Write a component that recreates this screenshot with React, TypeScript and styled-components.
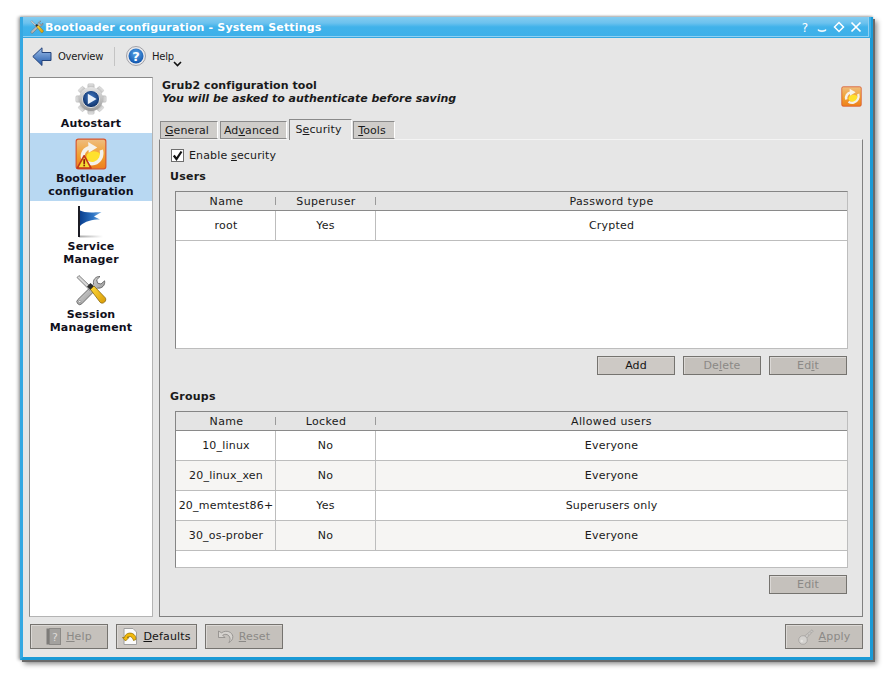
import * as React from "react";
import styled, { createGlobalStyle } from "styled-components";

const Global = createGlobalStyle`
  html, body { margin: 0; padding: 0; background: #fff; }
  body { font-family: "DejaVu Sans", sans-serif; font-size: 11px; color: #1a1a1a; letter-spacing: 0.15px; }
`;

const Desktop = styled.div`
  padding: 17px 0 0 20px;
  width: 873px;
  height: 665px;
  overflow: hidden;
`;

const Win = styled.div`
  box-sizing: border-box;
  width: 853px;
  height: 643px;
  display: flex;
  flex-direction: column;
  background: #e6e6e6;
  border: solid #1a9ad6;
  border-width: 0 3px 3px 3px;
  border-left-color: #35a8e2;
  box-shadow: 2px 2px 0 #6a6a6a, 4px 4px 5px rgba(0, 0, 0, 0.45), -2px 0 3px rgba(0, 0, 0, 0.3), 0 -1px 2px rgba(0, 0, 0, 0.2);
`;

const TitleBar = styled.div`
  height: 21px;
  flex: none;
  display: flex;
  align-items: center;
  padding: 0 6px 0 7px;
  margin-right: -1px;
  color: #fff;
  background: linear-gradient(#84ccf0, #6cc2ee 30%, #40b2ea 50%, #3db0e9);
  border-bottom: 1px solid #35a8e2;
  border-right: 2px solid #3db0e9;
  box-shadow: inset -1px -1px 0 #8fd0f2;
  box-sizing: border-box;
`;

const TitleText = styled.div`
  margin-left: 1px;
  font-weight: bold;
  font-size: 11px;
  letter-spacing: 0.17px;
  flex: 1;
  white-space: nowrap;
`;

const TitleButtons = styled.div`
  display: flex;
  align-items: center;
  gap: 3px;
`;

const Inner = styled.div`
  flex: 1;
  display: flex;
  flex-direction: column;
  padding: 0 7px 8px 6px;
  min-height: 0;
`;

const Toolbar = styled.div`
  height: 39px;
  flex: none;
  display: flex;
  align-items: center;
  padding: 0 0 3px 3px;
  box-sizing: border-box;
`;

const ToolLabel = styled.span`
  margin-left: 6px;
  font-size: 10px;
  letter-spacing: -0.25px;
`;

const ToolSep = styled.div`
  width: 1px;
  height: 19px;
  background: #c4c4c4;
  margin: 0 11px 0 11px;
`;

const ToolMenu = styled.div`
  position: relative;
  display: flex;
  align-items: center;
`;

const MenuArrow = styled.svg`
  position: absolute;
  left: 47px;
  top: 15px;
`;

const Main = styled.div`
  flex: 1;
  display: flex;
  gap: 6px;
  min-height: 0;
`;

const Sidebar = styled.div`
  box-sizing: border-box;
  width: 124px;
  flex: none;
  background: #fff;
  border: 1px solid #b4b4b4;
  border-top-color: #8c8c8c;
  border-left-color: #8c8c8c;
`;

const NavItem = styled.div<{ $active?: boolean }>`
  display: flex;
  flex-direction: column;
  align-items: center;
  padding: 5px 0 3px;
  background: ${(p) => (p.$active ? "#b8d8f2" : "transparent")};
`;

const NavIcon = styled.div`
  height: 32px;
  margin-bottom: 2px;
`;

const NavLabel = styled.div`
  font-weight: bold;
  font-size: 11px;
  line-height: 13px;
  letter-spacing: 0.15px;
  text-align: center;
  color: #10101c;
`;

const Content = styled.div`
  flex: 1;
  min-width: 0;
  display: flex;
  flex-direction: column;
`;

const Header = styled.div`
  height: 44px;
  flex: none;
  display: flex;
  justify-content: space-between;
  padding: 2px 1px 0 3px;
  box-sizing: border-box;
`;

const HeadTitle = styled.div`
  font-weight: bold;
  line-height: 13px;
  letter-spacing: 0.08px;
`;

const HeadNote = styled(HeadTitle)`
  font-style: italic;
  letter-spacing: -0.02px;
`;

const HeadIcon = styled.div`
  margin-top: 7px;
`;

const Tabs = styled.div`
  height: 18px;
  flex: none;
  display: flex;
  align-items: flex-end;
  padding-left: 1px;
  position: relative;
  z-index: 1;
`;

const Tab = styled.div<{ $active?: boolean; $w: number; $gap?: number }>`
  box-sizing: border-box;
  height: ${(p) => (p.$active ? "21px" : "18px")};
  padding: ${(p) => (p.$active ? "3px" : "2px")} 4px 0 0;
  width: ${(p) => p.$w}px;
  margin-right: ${(p) => p.$gap ?? 2}px;
  margin-bottom: ${(p) => (p.$active ? "-1px" : "0")};
  text-align: center;
  background: ${(p) => (p.$active ? "#e6e6e6" : "#cfcdca")};
  border: 1px solid #8a8a8a;
  border-bottom: ${(p) => (p.$active ? "none" : "1px solid #8a8a8a")};
  border-right-color: #fff;
  line-height: 13px;
  letter-spacing: 0.1px;
`;

const Pane = styled.div`
  box-sizing: border-box;
  flex: 1;
  border: 1px solid #808080;
  border-top-color: #f4f4f4;
  padding: 9px 15px 0 10px;
  min-height: 0;
  display: flex;
  flex-direction: column;
`;

const CheckRow = styled.label`
  display: flex;
  align-items: center;
  height: 13px;
  margin-left: 1px;
  gap: 5px;
`;

const CheckBox = styled.div`
  box-sizing: border-box;
  width: 13px;
  height: 13px;
  background: #fff;
  border: 1px solid #6e6e6e;
  display: flex;
  align-items: center;
  justify-content: center;
`;

const SectionLabel = styled.div<{ $top: number }>`
  font-weight: bold;
  line-height: 13px;
  letter-spacing: 0.25px;
  margin-top: ${(p) => p.$top}px;
`;

const TableBox = styled.div<{ $h: number }>`
  box-sizing: border-box;
  height: ${(p) => p.$h}px;
  margin: 8px 0 0 5px;
  width: 673px;
  background: #fff;
  border: 1px solid #bdbdbd;
  border-top-color: #858585;
  border-left-color: #858585;
  display: flex;
  flex-direction: column;
`;

const HeadRow = styled.div`
  display: grid;
  grid-template-columns: 99px 100px 1fr;
  height: 18px;
  flex: none;
  background: #e4e4e4;
  border-bottom: 1px solid #8a8a8a;
  padding-left: 1px;
`;

const HeadCell = styled.div<{ $tick?: boolean }>`
  position: relative;
  text-align: center;
  line-height: 19px;
  letter-spacing: 0.35px;
  &::after {
    content: "";
    display: ${(p) => (p.$tick ? "block" : "none")};
    position: absolute;
    right: 0;
    top: 5px;
    width: 1px;
    height: 8px;
    background: #9a9a9a;
  }
`;

const Row = styled.div<{ $alt?: boolean }>`
  display: grid;
  grid-template-columns: 99px 100px 1fr;
  height: 30px;
  flex: none;
  box-sizing: border-box;
  padding-left: 1px;
  background: ${(p) => (p.$alt ? "#f6f5f3" : "#fff")};
  border-bottom: 1px solid #bdbdbd;
`;

const Cell = styled.div`
  display: flex;
  align-items: center;
  justify-content: center;
  border-right: 1px solid #bdbdbd;
  white-space: nowrap;
  letter-spacing: 0.2px;
  &:last-child {
    border-right: none;
  }
`;

const ButtonRow = styled.div`
  display: flex;
  justify-content: flex-end;
  gap: 8px;
  margin-top: 7px;
  width: 677px;
`;

const PushButton = styled.div<{ $off?: boolean; $w?: number; $h?: number }>`
  box-sizing: border-box;
  width: ${(p) => p.$w ?? 78}px;
  height: ${(p) => p.$h ?? 19}px;
  display: flex;
  align-items: center;
  justify-content: center;
  gap: 5px;
  background: ${(p) => (p.$off ? "#c5c1bc" : "#cdc9c5")};
  color: ${(p) => (p.$off ? "#8b8986" : "#141414")};
  border: 1px solid #75736f;
  box-shadow: inset 1px 1px 0 #dbd8d5;
  white-space: nowrap;
`;

const Footer = styled.div`
  height: 32px;
  flex: none;
  display: flex;
  align-items: flex-end;
  padding-left: 1px;
  gap: 8px;
`;

const FooterGap = styled.div`
  flex: 1;
`;

const Tools = ({ size = 32 }: { size?: number }) => (
  <svg width={size} height={size} viewBox="0 0 32 32">
    <defs>
      <linearGradient id="steel" x1="0" y1="0" x2="1" y2="1">
        <stop offset="0" stopColor="#f2f2f2" />
        <stop offset="1" stopColor="#7d7d7d" />
      </linearGradient>
      <linearGradient id="yel" x1="0" y1="0" x2="1" y2="1">
        <stop offset="0" stopColor="#ffdb3a" />
        <stop offset="1" stopColor="#d99a06" />
      </linearGradient>
    </defs>
    <path d="M25 2.500a6 6 0 0 0-6.400 7.600L2.800 25.600a2.900 2.900 0 0 0 4 4.200L22.400 14a6 6 0 0 0 7.200-7.200L26 10l-3.400-.8-.9-3.400z" fill="url(#steel)" stroke="#555" strokeWidth="0.8" />
    <circle cx="4.800" cy="27.600" r="1.100" fill="#fff" stroke="#666" strokeWidth="0.5" />
    <path d="M2 3.500 4 1.500 17 14l-2.200 2.200z" fill="#d8d8d8" stroke="#555" strokeWidth="0.7" />
    <path d="M12 12.500 15.500 9l3.500 3.500L15.500 16z" fill="#2c2c2c" />
    <path d="M15.500 15.500 19 12l11 11.500c1.400 1.600.8 3.400-.4 4.600-1.300 1.200-3 1.500-4.500.2z" fill="url(#yel)" stroke="#7a5a04" strokeWidth="0.7" />
  </svg>
);

const Gear = () => {
  const teeth = [0, 45, 90, 135, 180, 225, 270, 315];
  return (
    <svg width="32" height="32" viewBox="0 0 32 32">
      <defs>
        <linearGradient id="gearG" x1="0" y1="0" x2="0" y2="1">
          <stop offset="0" stopColor="#e6e6e6" />
          <stop offset="1" stopColor="#9a9a9a" />
        </linearGradient>
        <radialGradient id="playG" cx="0.5" cy="0.4" r="0.6">
          <stop offset="0" stopColor="#3f78c4" />
          <stop offset="1" stopColor="#0d2f66" />
        </radialGradient>
      </defs>
      {teeth.map((a) => (
        <rect key={a} x="12.800" y="0.800" width="6.400" height="7" rx="1.200" fill="url(#gearG)" stroke="#a8a8a8" strokeWidth="0.4" transform={`rotate(${a} 16 16)`} />
      ))}
      <circle cx="16" cy="16" r="12" fill="url(#gearG)" />
      <circle cx="16" cy="16" r="8.600" fill="url(#playG)" stroke="#dcdcdc" strokeWidth="1" />
      <path d="M12.800 10.800 21.600 16l-8.800 5.200z" fill="#e8f0fa" />
    </svg>
  );
};

const Boot = ({ size = 32, warn = true }: { size?: number; warn?: boolean }) => (
  <svg width={size} height={size} viewBox="2 2 28 28">
    <defs>
      <linearGradient id="bootG" x1="0" y1="0" x2="0" y2="1">
        <stop offset="0" stopColor="#efbd80" />
        <stop offset="0.55" stopColor="#f0a030" />
        <stop offset="1" stopColor="#ee7f1c" />
      </linearGradient>
    </defs>
    <rect x="3" y="3" width="26" height="26" rx="2" fill="url(#bootG)" stroke="#d8542a" strokeWidth="1" />
    <ellipse cx="18.500" cy="18.500" rx="6.500" ry="5" fill="#ffe12e" />
    <path d="M9 20c-1.200-4.500 1.500-8.500 6-9.500" fill="none" stroke="#f6f2ea" strokeWidth="3.400" />
    <path d="M13.500 5.500 21.500 10.300 14 15z" fill="#f6f2ea" />
    <path d="M25 12.500c1.500 5-1 10.500-6 11.700-2.500.6-5 .1-7-1.200" fill="none" stroke="#f4f1ea" strokeWidth="3" />
    {warn && (
      <>
        <path d="M10 17.500 16 28.300H4z" fill="#f5dc35" stroke="#c2361a" strokeWidth="1.400" strokeLinejoin="round" />
        <rect x="9.300" y="20.500" width="1.500" height="4.200" fill="#8a1d0c" />
        <rect x="9.300" y="25.300" width="1.500" height="1.500" fill="#8a1d0c" />
      </>
    )}
  </svg>
);

const Flag = () => (
  <svg width="32" height="32" viewBox="0 0 32 32">
    <defs>
      <linearGradient id="flagG" x1="0" y1="0" x2="1" y2="0">
        <stop offset="0" stopColor="#0a3f8e" />
        <stop offset="0.6" stopColor="#2d74c4" />
        <stop offset="1" stopColor="#79aee0" />
      </linearGradient>
      <linearGradient id="flagS" x1="0" y1="0" x2="1" y2="0">
        <stop offset="0" stopColor="#aaa" />
        <stop offset="1" stopColor="#fff" />
      </linearGradient>
    </defs>
    <rect x="4" y="29.500" width="24" height="2" fill="url(#flagS)" />
    <rect x="3" y="0" width="2" height="31" fill="#1c1c24" />
    <path d="M5 4.500c4 2 9 2.500 21.500 1.500L19 10.500 25 13.500C17 13.500 10 15 5 20z" fill="url(#flagG)" />
  </svg>
);

const BackArrow = () => (
  <svg width="20" height="19" viewBox="0 0 20 19">
    <defs>
      <linearGradient id="backG" x1="0" y1="0" x2="0" y2="1">
        <stop offset="0" stopColor="#9fc0ea" />
        <stop offset="1" stopColor="#1f57a8" />
      </linearGradient>
    </defs>
    <path d="M.8 9.500 10 .8v4.700h9v8h-9v5z" fill="url(#backG)" stroke="#24437a" strokeWidth="1" strokeLinejoin="round" />
  </svg>
);

const HelpCircle = () => (
  <svg width="20" height="20" viewBox="0 0 20 20">
    <defs>
      <radialGradient id="helpG" cx="0.5" cy="0.35" r="0.7">
        <stop offset="0" stopColor="#5aa6ea" />
        <stop offset="1" stopColor="#0b4fa8" />
      </radialGradient>
    </defs>
    <circle cx="10" cy="10" r="9.500" fill="#e9e9ec" stroke="#8f8f96" strokeWidth="0.8" />
    <circle cx="10" cy="10" r="7.500" fill="url(#helpG)" />
    <text x="10" y="14.500" textAnchor="middle" fontSize="13" fontWeight="bold" fontFamily="'DejaVu Sans', sans-serif" fill="#fff">?</text>
  </svg>
);

const BookIcon = () => (
  <svg width="15" height="17" viewBox="0 0 15 17">
    <rect x="0.500" y="0.500" width="3" height="16" fill="#7d7b78" />
    <rect x="3.500" y="0.500" width="11" height="16" fill="#a3a19e" stroke="#8b8986" />
    <text x="9" y="13" textAnchor="middle" fontSize="11" fontFamily="'DejaVu Sans', sans-serif" fill="#dcdad7">?</text>
  </svg>
);

const DefaultsIcon = () => (
  <svg width="16" height="17" viewBox="0 0 16 17">
    <path d="M2 .5h9l3.500 3.500v12.500H2z" fill="#fbfbfb" stroke="#a0a0a0" />
    <path d="M.5 9.500h2c.5-4 6-6 9.500-3 1.500 1.300 2 3 2 5l-2.500 1c-.5-2-2-4.500-4.500-4-1 .2-1.500.5-2 1h2L3.500 13z" fill="#f2b90c" stroke="#8c6a05" strokeWidth="0.7" />
  </svg>
);

const ResetIcon = () => (
  <svg width="16" height="14" viewBox="0 0 16 14">
    <path d="M.5 1v6.500H7L4.700 5.200c2.500-1.800 6.500-.8 7.300 3 .2 1.500-.2 3-1.200 4.300 2.500-1 4.200-3.300 4-6C14.300 2 8.500-.5 3.500 2.800z" fill="#d6d3cf" stroke="#8b8986" strokeWidth="0.8" />
  </svg>
);

const KeyIcon = () => (
  <svg width="16" height="16" viewBox="0 0 16 16">
    <path d="M6 7.500 14 .8l1.200 1.400-1.400 1.500-1-.2.200 1.200-1.500 1.200-1-.2.200 1.200L8.500 9.500" fill="#c8c6c3" stroke="#a3a19e" strokeWidth="0.7" />
    <circle cx="5" cy="11" r="4.300" fill="#d4d2cf" stroke="#a3a19e" strokeWidth="0.8" />
    <circle cx="3.800" cy="12" r="1.200" fill="#e6e4e1" />
  </svg>
);

const WinGlyph = ({ kind }: { kind: string }) => (
  <svg width="14" height="14" viewBox="0 0 14 14">
    {kind === "help" && (
      <text x="7" y="12" textAnchor="middle" fontSize="12" fontFamily="'DejaVu Sans', sans-serif" fill="#fff">?</text>
    )}
    {kind === "min" && <path d="M3 9.500c2 1.500 6 1.500 8 0v1c-2 1.500-6 1.500-8 0z" fill="#fff" stroke="#fff" strokeWidth="0.6" />}
    {kind === "max" && <path d="M7 2.500 11.500 7 7 11.500 2.500 7z" fill="none" stroke="#fff" strokeWidth="1.500" />}
    {kind === "close" && <path d="M2.500 2.500 11.500 11.500M11.500 2.500 2.500 11.500" fill="none" stroke="#fff" strokeWidth="1.700" />}
  </svg>
);

const users = [["root", "Yes", "Crypted"]];
const groups = [
  ["10_linux", "No", "Everyone"],
  ["20_linux_xen", "No", "Everyone"],
  ["20_memtest86+", "Yes", "Superusers only"],
  ["30_os-prober", "No", "Everyone"],
];

export default function App() {
  return (
    <Desktop>
      <Global />
      <Win>
        <TitleBar>
          <Tools size={14} />
          <TitleText>Bootloader configuration - System Settings</TitleText>
          <TitleButtons>
            <WinGlyph kind="help" />
            <WinGlyph kind="min" />
            <WinGlyph kind="max" />
            <WinGlyph kind="close" />
          </TitleButtons>
        </TitleBar>
        <Inner>
          <Toolbar>
            <BackArrow />
            <ToolLabel>Overview</ToolLabel>
            <ToolSep />
            <ToolMenu>
              <HelpCircle />
              <ToolLabel>Help</ToolLabel>
              <MenuArrow width="9" height="6" viewBox="0 0 9 6">
                <path d="M1 1l3.500 3.500L8 1" fill="none" stroke="#111" strokeWidth="1.600" />
              </MenuArrow>
            </ToolMenu>
          </Toolbar>
          <Main>
            <Sidebar>
              <NavItem>
                <NavIcon><Gear /></NavIcon>
                <NavLabel>Autostart</NavLabel>
              </NavItem>
              <NavItem $active>
                <NavIcon><Boot /></NavIcon>
                <NavLabel>Bootloader<br />configuration</NavLabel>
              </NavItem>
              <NavItem>
                <NavIcon><Flag /></NavIcon>
                <NavLabel>Service<br />Manager</NavLabel>
              </NavItem>
              <NavItem>
                <NavIcon><Tools /></NavIcon>
                <NavLabel>Session<br />Management</NavLabel>
              </NavItem>
            </Sidebar>
            <Content>
              <Header>
                <div>
                  <HeadTitle>Grub2 configuration tool</HeadTitle>
                  <HeadNote>You will be asked to authenticate before saving</HeadNote>
                </div>
                <HeadIcon><Boot size={21} warn={false} /></HeadIcon>
              </Header>
              <Tabs>
                <Tab $w={58}><u>G</u>eneral</Tab>
                <Tab $w={67}>Ad<u>v</u>anced</Tab>
                <Tab $w={63} $active $gap={1}>S<u>e</u>curity</Tab>
                <Tab $w={42}><u>T</u>ools</Tab>
              </Tabs>
              <Pane>
                <CheckRow>
                  <CheckBox>
                    <svg width="11" height="11" viewBox="0 0 11 11">
                      <path d="M1.800 5.500 4.500 9 9.500 1.500" fill="none" stroke="#111" strokeWidth="2.200" />
                    </svg>
                  </CheckBox>
                  <span>Enable <u>s</u>ecurity</span>
                </CheckRow>
                <SectionLabel $top={8}>Users</SectionLabel>
                <TableBox $h={158}>
                  <HeadRow>
                    <HeadCell $tick>Name</HeadCell>
                    <HeadCell $tick>Superuser</HeadCell>
                    <HeadCell>Password type</HeadCell>
                  </HeadRow>
                  {users.map((r) => (
                    <Row key={r[0]}>
                      {r.map((c, i) => <Cell key={i}>{c}</Cell>)}
                    </Row>
                  ))}
                </TableBox>
                <ButtonRow>
                  <PushButton>Add</PushButton>
                  <PushButton $off><span>De<u>l</u>ete</span></PushButton>
                  <PushButton $off><span>Ed<u>i</u>t</span></PushButton>
                </ButtonRow>
                <SectionLabel $top={15}>Groups</SectionLabel>
                <TableBox $h={157}>
                  <HeadRow>
                    <HeadCell $tick>Name</HeadCell>
                    <HeadCell $tick>Locked</HeadCell>
                    <HeadCell>Allowed users</HeadCell>
                  </HeadRow>
                  {groups.map((r, n) => (
                    <Row key={r[0]} $alt={n % 2 === 1}>
                      {r.map((c, i) => <Cell key={i}>{c}</Cell>)}
                    </Row>
                  ))}
                </TableBox>
                <ButtonRow>
                  <PushButton $off>Edit</PushButton>
                </ButtonRow>
              </Pane>
            </Content>
          </Main>
          <Footer>
            <PushButton $off $h={25}><BookIcon /><span><u>H</u>elp</span></PushButton>
            <PushButton $w={81} $h={25}><DefaultsIcon /><span><u>D</u>efaults</span></PushButton>
            <PushButton $off $h={25}><ResetIcon /><span><u>R</u>eset</span></PushButton>
            <FooterGap />
            <PushButton $off $h={25}><KeyIcon /><span><u>A</u>pply</span></PushButton>
          </Footer>
        </Inner>
      </Win>
    </Desktop>
  );
}
